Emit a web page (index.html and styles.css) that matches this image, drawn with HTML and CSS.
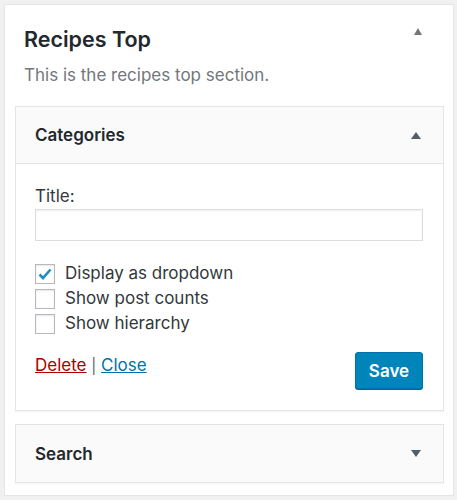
FILE: index.html
```html
<!DOCTYPE html>
<html>
<head>
<meta charset="utf-8">
<link rel="stylesheet" href="styles.css">
</head>
<body>
<div class="card">
  <div class="card-head">
    <h2 class="card-title">Recipes Top</h2>
    <span class="arrow arrow-up arrow-light"></span>
  </div>
  <p class="card-desc">This is the recipes top section.</p>

  <div class="widget">
    <div class="widget-head">
      <h3 class="widget-title">Categories</h3>
      <span class="arrow arrow-up"></span>
    </div>
    <div class="widget-body">
      <label class="field-label">Title:</label>
      <div class="text-input"></div>
      <div class="checks">
        <div class="check-row"><span class="checkbox checked"><svg width="14" height="12" viewBox="0 0 14 12"><path d="M1.5 6.5 L5 10 L12.5 1.5" fill="none" stroke="#1e8cbe" stroke-width="2.6"/></svg></span><span>Display as dropdown</span></div>
        <div class="check-row"><span class="checkbox"></span><span>Show post counts</span></div>
        <div class="check-row"><span class="checkbox"></span><span>Show hierarchy</span></div>
      </div>
      <div class="actions">
        <div class="links"><a class="link-delete">Delete</a> <span class="sep">|</span> <a class="link-close">Close</a></div>
        <button class="btn-save">Save</button>
      </div>
    </div>
  </div>

  <div class="widget collapsed">
    <div class="widget-head">
      <h3 class="widget-title">Search</h3>
      <span class="arrow arrow-down"></span>
    </div>
  </div>
</div>
</body>
</html>
```

FILE: styles.css
```css
html, body {
  margin: 0;
  padding: 0;
  background: #f1f1f1;
}
body {
  padding: 4px 3px 4px 4px;
  font-family: Inter, "Noto Sans", sans-serif;
  color: #23282d;
}
.card {
  background: #fff;
  border: 1px solid #e5e5e5;
  height: 492px;
  box-sizing: border-box;
  padding: 0 9px 0 10px;
}
.card-head {
  display: flex;
  justify-content: space-between;
  align-items: flex-start;
  padding: 20px 22px 0 9px;
}
.card-title {
  margin: 0;
  font-size: 21.5px;
  line-height: 28px;
  font-weight: 600;
  color: #23282d;
}
.arrow {
  width: 0;
  height: 0;
  border-left: 5px solid transparent;
  border-right: 5px solid transparent;
}
.arrow-up {
  border-bottom: 7px solid #555d66;
}
.arrow-light {
  border-left-width: 4.5px;
  border-right-width: 4.5px;
  border-bottom: 7px solid #72777c;
  margin-top: 3px;
}
.arrow-down {
  border-top: 7px solid #555d66;
}
.card-desc {
  margin: 11px 0 0 9px;
  font-size: 17px;
  line-height: 22px;
  color: #72777c;
}
.widget {
  margin-top: 20px;
  border: 1px solid #e5e5e5;
  box-shadow: 0 1px 1px rgba(0,0,0,0.04);
  background: #fff;
}
.widget.collapsed {
  margin-top: 13px;
}
.widget-head {
  background: #fafafa;
  height: 56px;
  display: flex;
  align-items: center;
  justify-content: space-between;
  padding: 0 22px 0 19px;
}
.widget.collapsed .widget-head {
  height: 57px;
}
.widget-body {
  border-top: 1px solid #e5e5e5;
  padding: 21px 20px 21px 19px;
}
.widget-title {
  margin: 0;
  font-size: 17px;
  font-weight: 600;
  color: #23282d;
}
.field-label {
  display: block;
  font-size: 17px;
  line-height: 22px;
  color: #32373c;
}
.text-input {
  margin-top: 2px;
  height: 30px;
  border: 1px solid #ddd;
  box-shadow: inset 0 1px 2px rgba(0,0,0,0.07);
}
.checks {
  margin-top: 22px;
  display: flex;
  flex-direction: column;
  gap: 4px;
}
.check-row {
  display: flex;
  align-items: center;
  gap: 10px;
  font-size: 17px;
  line-height: 21px;
  color: #32373c;
}
.checkbox {
  width: 20px;
  height: 20px;
  box-sizing: border-box;
  border: 1px solid #b4b9be;
  box-shadow: inset 0 1px 2px rgba(0,0,0,0.1);
  display: flex;
  align-items: center;
  justify-content: center;
  flex: none;
}
.actions {
  margin-top: 20px;
  display: flex;
  justify-content: space-between;
  align-items: flex-start;
}
.links {
  font-size: 17px;
  line-height: 22px;
  color: #555d66;
}
.sep {
  font-size: 15px;
  color: #555d66;
}
.link-delete {
  color: #a00;
  text-decoration: underline;
}
.link-close {
  color: #0073aa;
  text-decoration: underline;
}
.btn-save {
  width: 68px;
  height: 37px;
  margin-top: -2px;
  background: #0085ba;
  border: 1px solid #0073aa;
  border-radius: 3px;
  box-shadow: 0 1px 0 #006799;
  color: #fff;
  font-family: Inter, "Noto Sans", sans-serif;
  font-size: 17px;
  font-weight: 600;
  padding: 0;
}
```
